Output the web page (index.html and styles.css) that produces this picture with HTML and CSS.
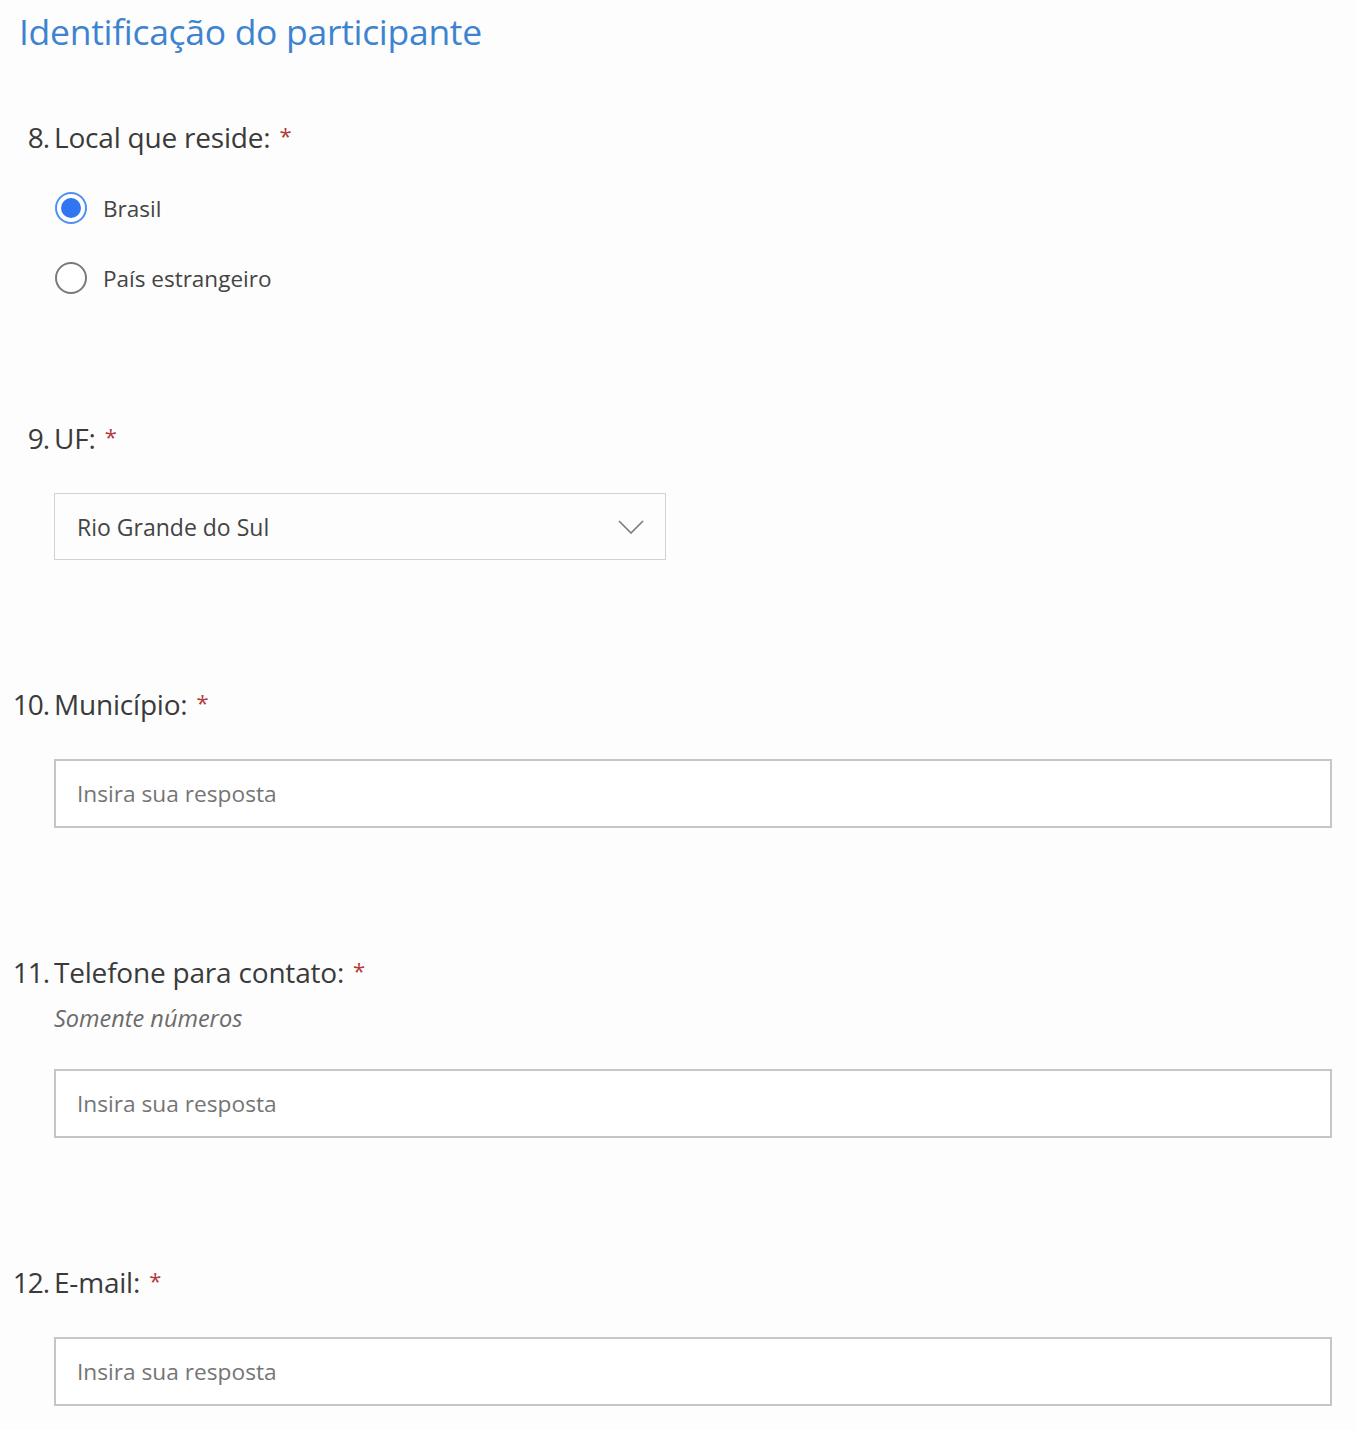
FILE: index.html
```html
<!DOCTYPE html>
<html lang="pt">
<head>
<meta charset="utf-8">
<title>Identificação do participante</title>
<link rel="stylesheet" href="styles.css">
</head>
<body>
<main class="form">
  <h1 class="section-title">Identificação do participante</h1>

  <section class="question q8">
    <div class="q-head"><span class="q-num">8.</span><span class="q-text">Local que reside:</span><span class="req">*</span></div>
    <div class="q-body radios">
      <label class="radio-row"><span class="radio checked"><span class="dot"></span></span><span class="radio-label">Brasil</span></label>
      <label class="radio-row"><span class="radio"></span><span class="radio-label">País estrangeiro</span></label>
    </div>
  </section>

  <section class="question q9">
    <div class="q-head"><span class="q-num">9.</span><span class="q-text">UF:</span><span class="req">*</span></div>
    <div class="q-body">
      <div class="select">
        <span class="select-value">Rio Grande do Sul</span>
        <svg class="chevron" width="26" height="14" viewBox="0 0 26 14"><path d="M1 1 L13 13 L25 1" fill="none" stroke="#7a7a7a" stroke-width="1.6"/></svg>
      </div>
    </div>
  </section>

  <section class="question q10">
    <div class="q-head"><span class="q-num">10.</span><span class="q-text">Município:</span><span class="req">*</span></div>
    <div class="q-body">
      <div class="input"><span class="placeholder">Insira sua resposta</span></div>
    </div>
  </section>

  <section class="question q11">
    <div class="q-head"><span class="q-num">11.</span><span class="q-text">Telefone para contato:</span><span class="req">*</span></div>
    <div class="q-sub">Somente números</div>
    <div class="q-body">
      <div class="input"><span class="placeholder">Insira sua resposta</span></div>
    </div>
  </section>

  <section class="question q12">
    <div class="q-head"><span class="q-num">12.</span><span class="q-text">E-mail:</span><span class="req">*</span></div>
    <div class="q-body">
      <div class="input"><span class="placeholder">Insira sua resposta</span></div>
    </div>
  </section>
</main>
</body>
</html>
```

FILE: styles.css
```css
html, body {
  margin: 0;
  padding: 0;
  background: #fdfdfd;
}
body {
  font-family: "Open Sans", "Noto Sans", "Liberation Sans", sans-serif;
  color: #3b3b3b;
}
.form {
  padding: 6px 24px 0 0;
}
.section-title {
  margin: 0 0 61px 19px;
  font-size: 35.5px;
  line-height: 50px;
  font-weight: 400;
  color: #3d83d0;
  letter-spacing: -0.3px;
}
.question {
  margin-bottom: 124px;
}
.question.q8 {
  margin-bottom: 105px;
}
.question.q12 {
  margin-bottom: 0;
}
.q-head {
  display: flex;
  align-items: baseline;
  height: 40px;
  line-height: 40px;
  font-size: 28px;
  letter-spacing: -0.2px;
  color: #3a3a3a;
}
.q-num {
  padding-right: 5px;
  text-align: right;
  box-sizing: border-box;
  flex: none;
  width: 54px;
  letter-spacing: -1px;
}
.req {
  color: #b33a3a;
  font-size: 22px;
  margin-left: 9px;
  position: relative;
  top: -4px;
}
.q-body {
  margin-left: 54px;
  margin-top: 35px;
}
.q-sub {
  margin: 11px 0 0 54px;
  line-height: 30px;
  font-size: 23.5px;
  font-style: italic;
  color: #6b6b6b;
}
.q11 .q-body {
  margin-top: 36px;
}
.radios {
  margin-top: 16px;
  margin-left: 55px;
  display: flex;
  flex-direction: column;
}
.radio-row {
  display: flex;
  align-items: center;
  height: 70px;
}
.radio {
  width: 32px;
  height: 32px;
  box-sizing: border-box;
  border: 2px solid #7a7a7a;
  border-radius: 50%;
  display: flex;
  align-items: center;
  justify-content: center;
  flex: none;
  background: #fff;
}
.radio.checked {
  border-color: #4f8ff4;
}
.dot {
  width: 20px;
  height: 20px;
  border-radius: 50%;
  background: #2f76f0;
}
.radio-label {
  margin-left: 16px;
  font-size: 22.5px;
  color: #444;
}
.select {
  width: 612px;
  height: 67px;
  box-sizing: border-box;
  border: 1.5px solid #d2d2d2;
  background: #fdfdfd;
  display: flex;
  align-items: center;
  justify-content: space-between;
  padding: 0 21px 0 22px;
}
.select-value {
  font-size: 23px;
  color: #444;
}
.chevron {
  display: block;
}
.input {
  height: 69px;
  box-sizing: border-box;
  border: 2px solid #c6c6c6;
  background: #fff;
  display: flex;
  align-items: center;
  padding-left: 21px;
}
.placeholder {
  font-size: 22.7px;
  color: #757575;
}
```
